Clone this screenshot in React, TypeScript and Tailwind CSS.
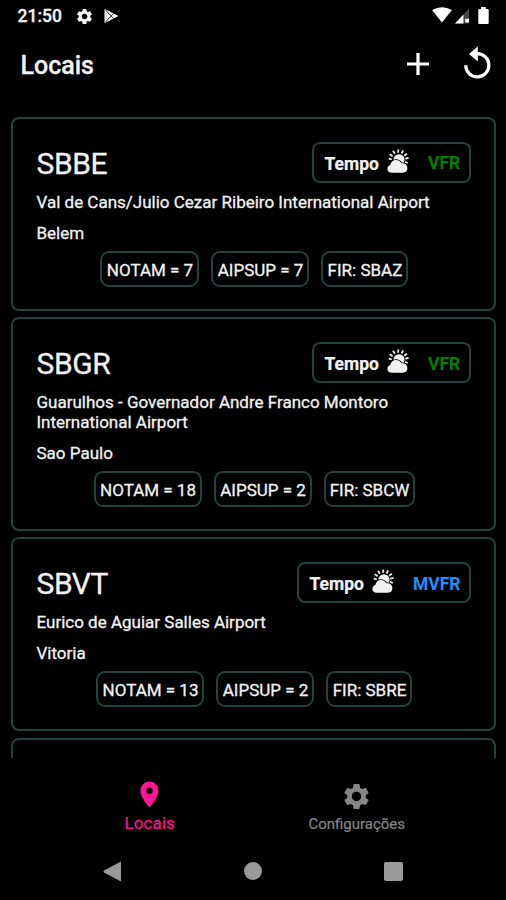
import React from "react";
import { MdPlace, MdSettings } from "react-icons/md";

type Place = {
  code: string;
  name: string[];
  city: string;
  rule: "VFR" | "MVFR";
  chips: { label: string; width: string }[];
  height: string;
};

const places: Place[] = [
  {
    code: "SBBE",
    name: ["Val de Cans/Julio Cezar Ribeiro International Airport"],
    city: "Belem",
    rule: "VFR",
    height: "h-[194px]",
    chips: [
      { label: "NOTAM = 7", width: "w-[99px]" },
      { label: "AIPSUP = 7", width: "w-[98px]" },
      { label: "FIR: SBAZ", width: "w-[87px]" },
    ],
  },
  {
    code: "SBGR",
    name: ["Guarulhos - Governador Andre Franco Montoro", "International Airport"],
    city: "Sao Paulo",
    rule: "VFR",
    height: "h-[214px]",
    chips: [
      { label: "NOTAM = 18", width: "w-[108px]" },
      { label: "AIPSUP = 2", width: "w-[98px]" },
      { label: "FIR: SBCW", width: "w-[91px]" },
    ],
  },
  {
    code: "SBVT",
    name: ["Eurico de Aguiar Salles Airport"],
    city: "Vitoria",
    rule: "MVFR",
    height: "h-[194px]",
    chips: [
      { label: "NOTAM = 13", width: "w-[108px]" },
      { label: "AIPSUP = 2", width: "w-[98px]" },
      { label: "FIR: SBRE", width: "w-[86px]" },
    ],
  },
];

function SunCloudIcon() {
  return (
    <svg className="h-[24px] w-[22px]" viewBox="0 0 22 24">
      <circle cx="12" cy="10.800" r="5.600" fill="#f2f2f2" />
      <path
        d="M4.800 10.500 1.800 9.700M5.600 7.300 2.700 5.100M7.900 4.700 6 1.800M11.200 3.700V.4M14.600 4.500 16.100 1.500M17.200 6.700 20 4.600M18.300 9.700 21.500 9M18 12.800 20.800 14"
        stroke="#f2f2f2"
        strokeWidth="1.800"
      />
      <path
        d="M4.600 23.800C1.800 23.800.4 22 .4 19.800c0-1.900 1.200-3.400 2.900-3.900C3.800 12.800 6.200 10.900 9 10.900c2.300 0 4.300 1.200 5.300 3.300 3.500-.4 6.100 1.700 6.100 4.900 0 2.800-1.600 4.700-4.600 4.700z"
        fill="#f2f2f2"
        stroke="#000"
        strokeWidth="1.500"
        paintOrder="stroke"
      />
    </svg>
  );
}

function StatusBar() {
  return (
    <div className="flex h-8 items-center pl-[17.5px] pr-[16px]">
      <span className="w-[57px] text-[17.5px] font-medium leading-8 [-webkit-text-stroke:0.3px]">21:50</span>
      <MdSettings className="h-[19px] w-[19px]" />
      <svg className="ml-[10px] h-[16px] w-[15px]" viewBox="0 0 15 16">
        <path d="M0.5 0.8 14.5 8 0.5 15.2z" fill="#f4f4f4" />
        <path d="M1 1.5 9.5 10.5M1 14.5 9.5 5.5" stroke="#000" strokeWidth="0.8" />
      </svg>
      <div className="flex-1" />
      <svg className="-mt-[2px] h-[16px] w-[20px]" viewBox="0 0 20 16">
        <path d="M0 3Q10-2.6 20 3L10 15.500z" fill="#fff" />
      </svg>
      <svg className="-mt-px ml-[3px] h-[16px] w-[15px]" viewBox="0 0 16 16">
        <path d="M15 0V16H0z" fill="#444" />
        <path d="M9 6.400V16H0zM11 11h4v4h-4z" fill="#fff" />
      </svg>
      <svg className="-mt-[2px] ml-[8px] mr-px h-[17px] w-[11px]" viewBox="0 0 11 18">
        <path d="M3 0h5v2h2q1 0 1 1v14q0 1-1 1H1q-1 0-1-1V3q0-1 1-1h2z" fill="#fff" />
      </svg>
    </div>
  );
}

function PlaceCard({ place }: { place: Place }) {
  return (
    <article
      className={`${place.height} shrink-0 rounded-[8px] border-2 border-[#24413e] px-[23px] pt-[23px]`}
    >
      <div className="flex h-[41px] items-center justify-between">
        <h2 className="pl-[0.5px] pt-[3px] text-[30px] leading-[40px] tracking-[-0.4px] [-webkit-text-stroke:0.3px]">
          {place.code}
        </h2>
        <div className="flex h-[41px] items-center rounded-[8px] border-2 border-[#24413e] px-[10px]">
          <span className="w-[63px] whitespace-nowrap pl-[0.5px] pt-[3px] text-[17.5px] font-bold [-webkit-text-stroke:0.2px]">
            Tempo
          </span>
          <span className="-mt-[3px] block w-[24px]">
            <SunCloudIcon />
          </span>
          <span
            className={`ml-[17px] pt-[2px] text-[17.5px] font-bold ${
              place.rule === "VFR" ? "w-[31px] text-[#008000]" : "w-[46px] text-[#1e90ff]"
            }`}
          >
            {place.rule}
          </span>
        </div>
      </div>
      <div className="mt-[9px] whitespace-nowrap pl-[0.5px] text-[17px] leading-[20px] [-webkit-text-stroke:0.3px]">
        {place.name.map((line) => (
          <p key={line}>{line}</p>
        ))}
        <p className="mt-[10.5px]">{place.city}</p>
      </div>
      <div className="mt-[8px] flex justify-center gap-[12px] pl-px">
        {place.chips.map((chip) => (
          <span
            key={chip.label}
            className={`${chip.width} flex h-[36.5px] items-center justify-center whitespace-nowrap rounded-[9px] border-2 border-[#24413e] pl-px pt-[3px] text-[17px] [-webkit-text-stroke:0.3px]`}
          >
            {chip.label}
          </span>
        ))}
      </div>
    </article>
  );
}

export default function App() {
  return (
    <div className="flex h-[900px] w-[506px] flex-col overflow-hidden bg-black font-['Roboto',sans-serif] text-[#f2f2f2]">
      <StatusBar />
      <header className="flex h-[68px] items-center pl-[20.5px] pr-[15px]">
        <h1 className="flex-1 text-[25px] font-medium [-webkit-text-stroke:0.3px]">Locais</h1>
        <svg className="-mt-[4px] h-[24px] w-[24px]" viewBox="0 0 24 24">
          <path d="M12 1v22M1 12h22" stroke="#fff" strokeWidth="3.200" />
        </svg>
        <svg className="-mt-[7px] ml-[33px] h-[34px] w-[28px]" viewBox="0 0 28 34">
          <path d="M2.700 19.300A11.600 11.600 0 1 0 14 7.700" fill="none" stroke="#fff" strokeWidth="3.200" />
          <path d="M14.800 0.500V15.500L6 8z" fill="#fff" />
        </svg>
      </header>
      <main className="flex h-[658px] flex-col gap-[6.2px] overflow-hidden pl-[11px] pr-[10px] pt-[17px]">
        {places.map((place) => (
          <PlaceCard key={place.code} place={place} />
        ))}
        <div className="h-[194px] shrink-0 rounded-[8px] border-2 border-[#24413e]" />
      </main>
      <nav className="flex h-[84px] pl-[46px] pr-[46px] pt-[21px]">
        <div className="flex w-[208px] flex-col items-center text-[#ff1493]">
          <MdPlace className="h-[31px] w-[31px]" />
          <span className="text-[17px] leading-[26px] tracking-[0.1px] [-webkit-text-stroke:0.2px]">Locais</span>
        </div>
        <div className="flex w-[207px] flex-col items-center pt-[2px] text-[#858585]">
          <MdSettings className="h-[31px] w-[31px]" />
          <span className="text-[15px] leading-[25px] [-webkit-text-stroke:0.2px]">Configurações</span>
        </div>
      </nav>
      <footer className="flex h-[58px] items-start justify-between pl-[103px] pr-[103px] pt-[19px] text-[#9a9a9a]">
        <svg className="h-[21px] w-[19px]" viewBox="0 0 19 21">
          <path d="M18 0.500V20.500L1 11.500Q0 10.500 1 9.500z" fill="currentColor" />
        </svg>
        <span className="mt-[1px] h-[18px] w-[18px] rounded-full bg-[#9a9a9a]" />
        <span className="mt-[1px] h-[19px] w-[19px] rounded-[2px] bg-[#9a9a9a]" />
      </footer>
    </div>
  );
}
